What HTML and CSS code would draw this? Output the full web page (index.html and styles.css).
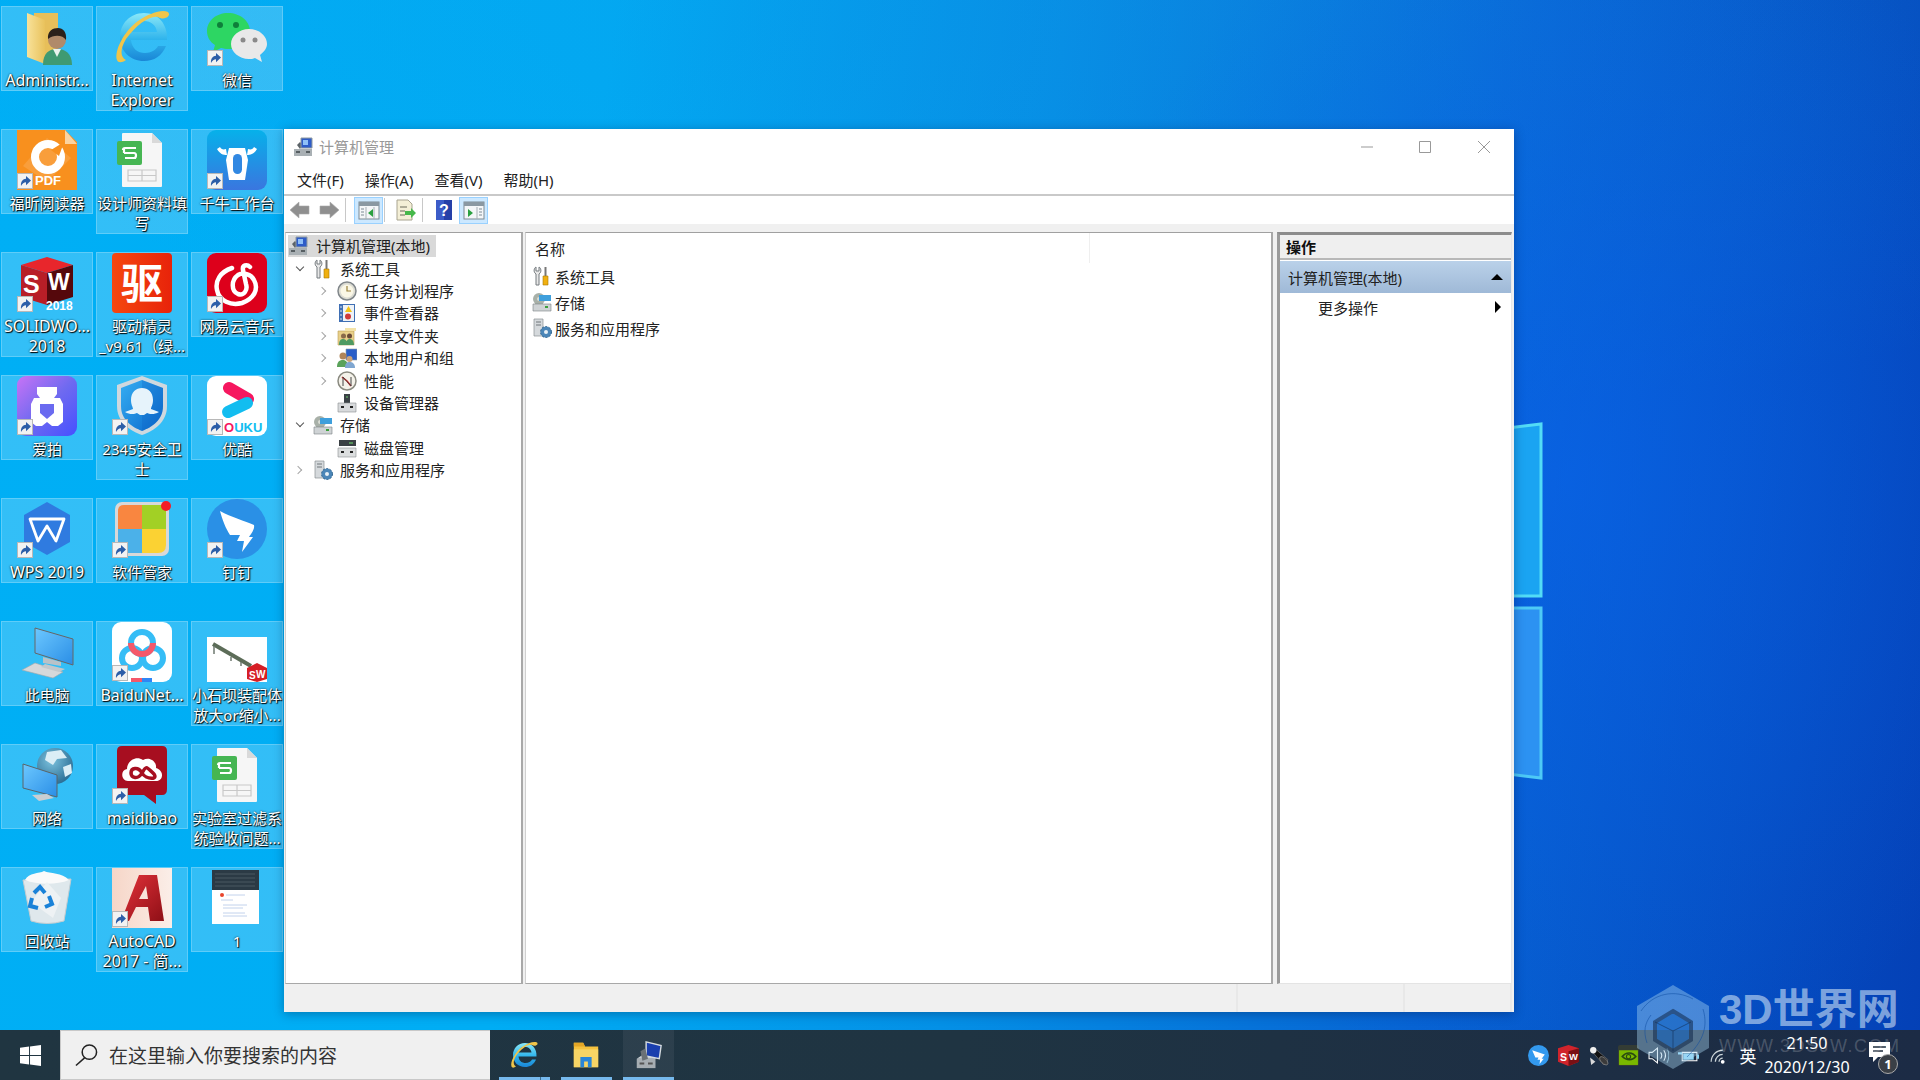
FILE: index.html
```html
<!DOCTYPE html>
<html lang="zh-CN">
<head>
<meta charset="utf-8">
<title>计算机管理</title>
<link rel="stylesheet" href="styles.css">
</head>
<body>
<svg class="sprite" xmlns="http://www.w3.org/2000/svg">
<defs>
<linearGradient id="g-ie" x1="0" y1="0" x2="0" y2="1"><stop offset="0" stop-color="#8be8f8"/><stop offset=".55" stop-color="#2fb4ec"/><stop offset="1" stop-color="#1a86d6"/></linearGradient>
<linearGradient id="g-qn" x1="0" y1="0" x2="0" y2="1"><stop offset="0" stop-color="#06b1ea"/><stop offset="1" stop-color="#3a76df"/></linearGradient>
<linearGradient id="g-qu" x1="0" y1="0" x2="1" y2="0"><stop offset="0" stop-color="#f5470f"/><stop offset="1" stop-color="#e8230a"/></linearGradient>
<linearGradient id="g-ap" x1="0" y1="0" x2="1" y2="1"><stop offset="0" stop-color="#c873f6"/><stop offset=".5" stop-color="#6f6af0"/><stop offset="1" stop-color="#4650ff"/></linearGradient>
<linearGradient id="g-sh" x1="0" y1="0" x2="1" y2="1"><stop offset="0" stop-color="#35aef2"/><stop offset="1" stop-color="#0a68cc"/></linearGradient>
<linearGradient id="g-mon" x1="0" y1="0" x2="1" y2="1"><stop offset="0" stop-color="#6cc8ff"/><stop offset="1" stop-color="#2a8ee6"/></linearGradient>
<radialGradient id="g-globe" cx=".4" cy=".35" r=".8"><stop offset="0" stop-color="#7cc2de"/><stop offset="1" stop-color="#1d5f88"/></radialGradient>
<linearGradient id="g-cad" x1="0" y1="0" x2="1" y2="0"><stop offset="0" stop-color="#f6d6c8"/><stop offset="1" stop-color="#fbeee8"/></linearGradient>
<linearGradient id="g-a" x1="0" y1="0" x2="1" y2="1"><stop offset="0" stop-color="#e4323a"/><stop offset="1" stop-color="#8e0f16"/></linearGradient>
<linearGradient id="g-fold" x1="0" y1="0" x2="1" y2="0"><stop offset="0" stop-color="#f8e29a"/><stop offset="1" stop-color="#e9c25c"/></linearGradient>

<symbol id="i-lnk" viewBox="0 0 16 16"><rect x=".5" y=".5" width="15" height="15" fill="#f2f2f2" stroke="#b8b8b8"/><path d="M4 13C3.500 8.500 6 6 9 5.800V3l5 4.600-5 4.600V9.200C7 9.200 5.200 10.500 4 13Z" fill="#2c5ea8"/></symbol>

<symbol id="i-admin" viewBox="0 0 60 60"><path d="M17 6H41V50H17Z" fill="#e7bf5a"/><path d="M10 6 28 13V57L10 50Z" fill="url(#g-fold)"/><path d="M26 58C26 46 32 42 40 42S55 46 55 58Z" fill="#3f9a72"/><path d="M36 42 40 50 44 42Z" fill="#e8f2ee"/><circle cx="40" cy="33" r="9" fill="#b08a6a"/><path d="M31 32C30 24 36 21 41 21S50 25 49 33C46 28 37 27 31 32Z" fill="#2b211b"/></symbol>

<symbol id="i-ie" viewBox="0 0 60 60"><path fill-rule="evenodd" d="M55 33H19C20 42 26 46 33 46 39 46 44 43 46 39H54C50 49 42 54 32 54 18 54 8 44 8 30 8 17 18 6 32 6 46 6 56 17 55 33ZM19 25H45C44 18 39 14 32 14 25 14 20 18 19 25Z" fill="url(#g-ie)"/><path d="M5 53C2 44 12 24 26 14 38 6 50 2 56 5 60 9 52 14 46 10 38 8 24 18 14 32 8 42 8 50 14 53 10 56 6 56 5 53Z" fill="#f0c54a"/></symbol>

<symbol id="i-wechat" viewBox="0 0 60 60"><path d="M21 6C9 6 0 14 0 24c0 6 3 11 8 14l-2 7 8-4c2 .5 5 1 7 1 12 0 22-8 22-18S33 6 21 6Z" fill="#2dd663"/><circle cx="13" cy="18" r="3" fill="#0e7f3a"/><circle cx="29" cy="18" r="3" fill="#0e7f3a"/><path d="M42 22c-10 0-18 7-18 15s8 15 18 15c2 0 4 0 6-1l7 4-2-7c4-3 7-7 7-11 0-8-8-15-18-15Z" fill="#e9e9e9"/><circle cx="36" cy="33" r="2.500" fill="#8a8a8a"/><circle cx="48" cy="33" r="2.500" fill="#8a8a8a"/></symbol>

<symbol id="i-foxit" viewBox="0 0 60 60"><path d="M0 0H48L60 12V60H0Z" fill="#f8901e"/><path d="M48 0 60 14H48Z" fill="#fbd3a0"/><path d="M30 8 54 28 30 52 6 36Z" fill="#fff" opacity=".13"/><circle cx="31" cy="27" r="13" fill="none" stroke="#fff" stroke-width="8"/><path d="M34 20 47 12 42 26Z" fill="#f8901e"/><text class="svg-b" x="18" y="55" font-size="13" fill="#fff">PDF</text></symbol>

<symbol id="i-doc" viewBox="0 0 60 60"><path d="M11 3H40L50 13V56Q50 57 49 57H11Q10 57 10 56V4Q10 3 11 3Z" fill="#f6f6f6"/><path d="M40 3 50 13H40Z" fill="#d9d9d9"/><rect x="5" y="11" width="25" height="24" rx="2" fill="#46b653"/><path d="M11 20Q11 18 13 18H24M24 28H13M12 23H22Q24 23 24 25.500 24 28 22 28" fill="none" stroke="#fff" stroke-width="2.200"/><path d="M12 19V23" stroke="#fff" stroke-width="2.200"/><path d="M16 40H44V51H16ZM16 45.500H44M30 40V51" fill="none" stroke="#c8c8c8" stroke-width="1.200"/></symbol>

<symbol id="i-qn" viewBox="0 0 60 60"><rect width="60" height="60" rx="9" fill="url(#g-qn)"/><path d="M10 19C13 24 16 25 20 25L19 19C16 20 14 19 13 17ZM50 19C47 24 44 25 40 25L41 19C44 20 46 19 47 17Z" fill="#fff"/><path d="M22 18H38L41 30 38 50H22L19 30Z" fill="#fff"/><rect x="26" y="24" width="9" height="20" rx="4.500" fill="#3188e2"/></symbol>

<symbol id="i-sw" viewBox="0 0 60 60"><path d="M30 4 56 12 30 20 4 12Z" fill="#e8262c"/><path d="M4 12 30 20V52L4 44Z" fill="#b81e27"/><path d="M30 20 56 12V44L30 52Z" fill="#55080c"/><text class="svg-b" x="6" y="40" font-size="25" fill="#fff">S</text><text class="svg-b" x="31" y="37" font-size="23" fill="#fff">W</text><text class="svg-b" x="29" y="57" font-size="12" fill="#fff">2018</text></symbol>

<symbol id="i-qu" viewBox="0 0 60 60"><rect width="60" height="60" rx="4" fill="url(#g-qu)"/><text class="svg-b" x="30" y="46" font-size="42" text-anchor="middle" fill="#fff">驱</text></symbol>

<symbol id="i-163" viewBox="0 0 60 60"><rect width="60" height="60" rx="9" fill="#dd001b"/><path d="M25 15C13 19 8 28 10 37 12 48 24 53 35 50 47 46 52 36 47 27 44 21 36 19 31 22 24 27 24 38 31 41 37 43 41 37 39 31L36 17C35 12 40 11 43 14" fill="none" stroke="#fff" stroke-width="4.500" stroke-linecap="round"/></symbol>

<symbol id="i-aipai" viewBox="0 0 60 60"><rect width="60" height="60" rx="9" fill="url(#g-ap)"/><path d="M20 11H40V18L37 22H43L46 28V46L41 50H35L30 46 25 50H19L14 46V28L17 22H23L20 18Z" fill="#fff"/><path d="M23 28H37V37L30 43 23 37Z" fill="#6a6af0"/></symbol>

<symbol id="i-2345" viewBox="0 0 60 60"><path d="M30 0 55 9V30C55 46 42 55 30 59 18 55 5 46 5 30V9Z" fill="#cfd8de"/><path d="M30 4 51 12V30C51 44 40 51 30 55 20 51 9 44 9 30V12Z" fill="url(#g-sh)"/><path d="M30 4 51 12V30C51 44 40 51 30 55Z" fill="#0a5cc0" opacity=".25"/><path d="M19 24C19 16 24 12 30 12S41 16 41 24C41 29 39 31 39 33L47 36C42 39 37 38 35 37L32 39H28L25 37C23 38 18 39 13 36L21 33C21 31 19 29 19 24Z" fill="#e6f3fb"/></symbol>

<symbol id="i-youku" viewBox="0 0 60 60"><rect width="60" height="60" rx="9" fill="#fff"/><path d="M22 12 41 23" stroke="#f6175f" stroke-width="12" stroke-linecap="round"/><path d="M21 36 40 27" stroke="#12bdf0" stroke-width="12" stroke-linecap="round"/><text class="svg-b" x="17" y="56" font-size="13"><tspan fill="#f6175f">O</tspan><tspan fill="#12bdf0">UKU</tspan></text></symbol>

<symbol id="i-wps" viewBox="0 0 60 60"><path d="M30 3 53 16V43L30 56 7 43V16Z" fill="#2f7be0"/><path d="M13 20H47L39 42 30 27 21 42Z" fill="none" stroke="#fff" stroke-width="2.800" stroke-linejoin="round"/></symbol>

<symbol id="i-soft" viewBox="0 0 60 60"><rect x="3" y="3" width="54" height="54" rx="7" fill="#d8d8d8"/><path d="M6 12Q6 6 12 6H30V30H6Z" fill="#f98640"/><path d="M30 6H50Q54 6 54 12V30H30Z" fill="#a2d025"/><path d="M6 30H30V54H12Q6 54 6 48Z" fill="#4bb1e9"/><path d="M30 30H54V46Q54 54 46 54H30Z" fill="#fbd233"/><circle cx="54" cy="7" r="5" fill="#f41d25"/></symbol>

<symbol id="i-ding" viewBox="0 0 60 60"><circle cx="30" cy="30" r="30" fill="#2a90e6"/><path d="M13 12C24 18 38 22 47 26 48 30 44 35 42 38H46L35 53 37 42H30L33 36H23C19 30 15 20 13 12Z" fill="#fff"/></symbol>

<symbol id="i-pc" viewBox="0 0 60 60"><path d="M18 6 56 17V43L18 31Z" fill="url(#g-mon)" stroke="#666"/><path d="M26 35 44 40V44L26 41Z" fill="#b9c2c8"/><path d="M5 48 18 41 46 50 36 56Z" fill="#d6d8da" stroke="#a8a8a8" stroke-width=".6"/><path d="M28 42 48 47 42 50 24 45Z" fill="#c2c8cc"/></symbol>

<symbol id="i-baidu" viewBox="0 0 60 60"><rect width="60" height="60" rx="9" fill="#fff"/><circle cx="20" cy="36" r="10" fill="none" stroke="#35bdf6" stroke-width="6"/><circle cx="41" cy="36" r="10" fill="none" stroke="#35bdf6" stroke-width="6"/><circle cx="30" cy="21" r="11" fill="none" stroke="#35bdf6" stroke-width="6"/><path d="M19 21A11 11 0 0 0 41 21" fill="none" stroke="#f5586a" stroke-width="6"/><path d="M19 56H30V60H19Z" fill="#f5586a"/><path d="M30 56H40V60H30Z" fill="#2f86f5"/></symbol>

<symbol id="i-belt" viewBox="0 0 60 60"><rect y="15" width="60" height="45" fill="#fff"/><path d="M6 22 44 44" stroke="#5c6c58" stroke-width="4"/><path d="M7 24V32M24 35V39M34 40V44" stroke="#6f7a70" stroke-width="1.500"/><path d="M40 46 50 41 60 46 60 57 50 60 40 57Z" fill="#d61f26"/><text class="svg-b" x="42" y="57" font-size="10" fill="#fff">S</text><text class="svg-b" x="49" y="56" font-size="10" fill="#fff">W</text></symbol>

<symbol id="i-net" viewBox="0 0 60 60"><circle cx="38" cy="21" r="18" fill="url(#g-globe)"/><path d="M30 7 44 5 50 13 40 14 36 20 28 15ZM46 22 54 19 55 28 48 32Z" fill="#dbeef6"/><path d="M6 19 40 30V52L6 43Z" fill="url(#g-mon)" stroke="#5a6468"/><path d="M15 50 30 49 37 53 22 56Z" fill="#c8ced2"/></symbol>

<symbol id="i-maidi" viewBox="0 0 60 60"><path d="M10 1H50Q55 1 55 6V44Q55 50 50 50H44V59L32 50H10Q5 50 5 44V6Q5 1 10 1Z" fill="#a70e20"/><path d="M16 36C9 36 8 25 15 24 15 16 24 10 31 15 38 11 45 17 44 23 52 25 52 36 44 36Z" fill="#fff"/><path d="M30 28C26 21 19 23 19 28S26 35 30 28 34 21 41 28 34 35 30 28Z" fill="none" stroke="#a70e20" stroke-width="3.500"/></symbol>

<symbol id="i-bin" viewBox="0 0 60 60"><path d="M6 12 54 11 47 53Q30 58 14 53Z" fill="#dfe8ec" stroke="#c4ccd0"/><path d="M8 12C12 4 22 6 27 3 33 6 45 4 52 12 40 17 20 17 8 12Z" fill="#fafafa"/><path d="M30 14 44 30 36 50 14 34Z" fill="#eef2f4"/><path d="M17 25 23 19 28 25M32 28 35 36 28 39M21 40 13 38 15 30" fill="none" stroke="#1a82d8" stroke-width="4"/></symbol>

<symbol id="i-cad" viewBox="0 0 60 60"><rect width="60" height="60" fill="url(#g-cad)"/><path fill-rule="evenodd" d="M27 7H45L52 53H38L36 39H24L17 53H9ZM34 18 27 31H36Z" fill="url(#g-a)"/></symbol>

<symbol id="i-shot" viewBox="0 0 60 60"><rect x="5" y="2" width="47" height="54" fill="#fff"/><rect x="5" y="2" width="47" height="20" fill="#2b3a45"/><path d="M8 6H48M8 10H48M8 14H48M8 18H48" stroke="#4a5862"/><circle cx="15" cy="27" r="2" fill="#e8452c"/><path d="M19 27H38M14 32H26M16 37H40M16 40H36M16 45H38M16 48H40" stroke="#c2d2ec"/></symbol>

<symbol id="s-mgmt" viewBox="0 0 20 20"><path d="M1 12H19V19H1Z" fill="#a9b0b4"/><path d="M3 15H7M13 15H17" stroke="#3c4448" stroke-width="1.500"/><path d="M4 8 7 5 10 8 7 12Z" fill="#5c6368"/><path d="M8 1H19V11H8Z" fill="#2e5cc8" stroke="#8f9aa0"/><path d="M10 3H15V8H10Z" fill="#8fc0f8"/></symbol>
<symbol id="s-tools" viewBox="0 0 20 20"><path d="M4 19V8C1 6 2 2 4 1V5H7V1C9 2 10 6 7 8V19Z" fill="#e8e8e8" stroke="#747a7e"/><path d="M13.500 1V10" stroke="#777" stroke-width="2"/><path d="M11 10H16V19H11Z" fill="#f0b010" stroke="#a87a08" stroke-width=".6"/></symbol>
<symbol id="s-clock" viewBox="0 0 20 20"><circle cx="10" cy="10" r="9" fill="#dcdcd4" stroke="#80868a" stroke-width="1.500"/><circle cx="10" cy="10" r="6.500" fill="#faf7e6"/><path d="M10 5V10H14" stroke="#99803a" stroke-width="1.200" fill="none"/></symbol>
<symbol id="s-event" viewBox="0 0 20 20"><rect x="2" y="1" width="16" height="18" fill="#3f6fb4"/><rect x="6" y="2" width="11" height="16" fill="#eef2f6"/><path d="M3 4H5M3 8H5M3 12H5M3 16H5" stroke="#dfe7f0"/><path d="M11.500 3 15 9H8Z" fill="#f3c316"/><circle cx="11" cy="13.500" r="3" fill="#d03a3a"/></symbol>
<symbol id="s-share" viewBox="0 0 20 20"><path d="M1 5H17V19H1Z" fill="#e9d08a" stroke="#b89c50" stroke-width=".6"/><path d="M8 2H19V5H8Z" fill="#f4e3a8"/><circle cx="6.500" cy="10" r="2.500" fill="#8a6a4a"/><circle cx="12.500" cy="10" r="2.500" fill="#6a4a38"/><path d="M2 19C2 14 4 13 6.500 13S10 15 10 19ZM9 19C9 14 11 13 13 13S17 15 17 19Z" fill="#4f9a62"/></symbol>
<symbol id="s-users" viewBox="0 0 20 20"><path d="M9 1H20V12H9Z" fill="#2a5ec8" stroke="#8c9aa4" stroke-width=".6"/><circle cx="6" cy="8" r="3.500" fill="#b08458"/><path d="M0 19C0 13 3 12 6 12S11 14 11 19Z" fill="#5aa25a"/><circle cx="12.500" cy="11" r="3" fill="#c9a27a"/><path d="M8 20C8 15 10 14 12.500 14S18 15 18 20Z" fill="#7fa6d0"/></symbol>
<symbol id="s-perf" viewBox="0 0 20 20"><circle cx="10" cy="10" r="9" fill="#f4f2ea" stroke="#8a8a80" stroke-width="1.500"/><path d="M5 6 10 10 14 15" stroke="#d22" stroke-width="1.600" fill="none"/><path d="M6 15V6L14 15V6" stroke="#444" stroke-width="1" fill="none"/></symbol>
<symbol id="s-dev" viewBox="0 0 20 20"><path d="M7 1H13V10H7Z" fill="#3b4246"/><path d="M1 10H19V19H1Z" fill="#d8dadc" stroke="#8a8e90" stroke-width=".6"/><path d="M4 14H7M13 14H16" stroke="#222" stroke-width="2"/><path d="M9 4H11" stroke="#6fd06f"/></symbol>
<symbol id="s-store" viewBox="0 0 20 20"><circle cx="7" cy="7" r="6" fill="#a8b0a8"/><circle cx="7" cy="7" r="2" fill="#d8dcd4"/><path d="M7 3H19V9H7Z" fill="#3f9fdc"/><path d="M1 12H19V19H1Z" fill="#cfd3d5" stroke="#7b8185" stroke-width=".6"/><path d="M13 15H16" stroke="#3ca03c" stroke-width="2"/></symbol>
<symbol id="s-disk" viewBox="0 0 20 20"><path d="M2 2H19V8H2Z" fill="#3a4044"/><path d="M12 5H16" stroke="#6fe06f"/><path d="M1 10H19V19H1Z" fill="#dcdedf" stroke="#8a8e90" stroke-width=".6"/><path d="M4 14H7M13 14H16" stroke="#222" stroke-width="2"/></symbol>
<symbol id="s-svc" viewBox="0 0 20 20"><path d="M2 1H11V18H2Z" fill="#d5d9dc" stroke="#8b9094" stroke-width=".7"/><path d="M4 4H9M4 7H9" stroke="#70767a"/><circle cx="14" cy="14" r="5.500" fill="#4b86b8"/><circle cx="14" cy="14" r="2" fill="#e8f0f6"/><circle cx="14" cy="14" r="5.500" fill="none" stroke="#2f648f" stroke-dasharray="2 1.500"/></symbol>

<symbol id="t-back" viewBox="0 0 22 20"><path d="M1 10 10 2V6H20V14H10V18Z" fill="#8f8f8f" stroke="#aaa" stroke-width=".6"/></symbol>
<symbol id="t-fwd" viewBox="0 0 22 20"><path d="M21 10 12 2V6H2V14H12V18Z" fill="#8f8f8f" stroke="#aaa" stroke-width=".6"/></symbol>
<symbol id="t-pane-l" viewBox="0 0 22 20"><rect x="1" y="2" width="20" height="17" fill="#f4f6f8" stroke="#7c8a94"/><path d="M1 2H21V6H1Z" fill="#8a98a2"/><path d="M8 7V19M16 7V19" stroke="#a8b0b6"/><path d="M3 9H6M3 12H6M3 15H6" stroke="#7c8a94"/><path d="M15 9V17L10 13Z" fill="#2aa040"/></symbol>
<symbol id="t-pane-r" viewBox="0 0 22 20"><rect x="1" y="2" width="20" height="17" fill="#f4f6f8" stroke="#7c8a94"/><path d="M1 2H21V6H1Z" fill="#8a98a2"/><path d="M14 7V19" stroke="#a8b0b6"/><path d="M16 9H19M16 12H19M16 15H19" stroke="#7c8a94"/><path d="M5 9V17L10 13Z" fill="#2aa040"/></symbol>
<symbol id="t-export" viewBox="0 0 22 22"><path d="M2 1H13L17 5V21H2Z" fill="#f4efd6" stroke="#a8a490"/><path d="M5 8H12M5 12H10M5 16H10" stroke="#6a6a5a"/><path d="M10 12H16V9L21 14 16 19V16H10Z" fill="#46b84a"/></symbol>
<symbol id="t-help" viewBox="0 0 18 22"><rect x="1" y="1" width="16" height="20" fill="#2640a8"/><rect x="1" y="1" width="8" height="20" fill="#3c5cc8"/><text class="svg-b" x="9" y="17" font-size="16" text-anchor="middle" fill="#fff">?</text></symbol>

<symbol id="a-mgmt" viewBox="0 0 32 32"><path d="M4 20H24V30H4Z" fill="#a6adb2"/><path d="M4 20 10 16H26L24 20Z" fill="#c8ced2"/><path d="M7 25H12M16 25H21" stroke="#555" stroke-width="2"/><path d="M14 2 30 6 28 20 14 17Z" fill="#1a3fae" stroke="#d6dce0" stroke-width="1.500"/><path d="M8 12 13 9 16 20 10 22Z" fill="#6a7176"/></symbol>
<symbol id="a-folder" viewBox="0 0 32 32"><path d="M3 3H13L15 7H29V29H3Z" fill="#f5c23e"/><path d="M3 3H13L15 7H3Z" fill="#e3a626"/><path d="M3 10H29V29H3Z" fill="#f8d565"/><path d="M10 18H22V29H18V23H14V29H10Z" fill="#2a86d8"/></symbol>

<symbol id="y-ding" viewBox="0 0 20 20"><circle cx="10" cy="10" r="10" fill="#3399ee"/><path d="M4 5 16 9 13 13H15L11 18 11.500 14H9L10 12H7Z" fill="#fff"/></symbol>
<symbol id="y-sw" viewBox="0 0 20 20"><path d="M0 3 10 0 20 3V16L10 20 0 16Z" fill="#d0242c"/><path d="M10 6 20 3V16L10 20Z" fill="#7a1014"/><text class="svg-b" x="2" y="15" font-size="10" fill="#fff">S</text><text class="svg-b" x="10.500" y="14" font-size="9" fill="#fff">W</text></symbol>
<symbol id="y-spk" viewBox="0 0 20 20"><path d="M2 4 5 2 19 14 15 19Z" fill="#111" stroke="#777" stroke-width=".6"/><ellipse cx="15" cy="15" rx="2.500" ry="5" transform="rotate(-45 15 15)" fill="#3a3a3a" stroke="#999" stroke-width=".6"/><circle cx="5" cy="5" r="3" fill="#f0f0f0"/><path d="M2 12 7 16 3 19Z" fill="#d8d8d8"/></symbol>
<symbol id="y-nv" viewBox="0 0 20 20"><rect width="20" height="20" rx="2" fill="#343c34"/><rect x="1" y="5" width="18" height="14" fill="#7ab800"/><path d="M4 11C8 6 14 7 17 11 14 15 8 15 4 11Z" fill="none" stroke="#2a4a10" stroke-width="1.500"/><circle cx="10" cy="11" r="2" fill="none" stroke="#2a4a10"/></symbol>
<symbol id="y-vol" viewBox="0 0 20 20"><path d="M1 7H4L9 3V17L4 13H1Z" fill="none" stroke="#fff"/><path d="M12 7C13.500 9 13.500 11 12 13M15 5C17 8 17 12 15 15" fill="none" stroke="#fff"/><path d="M18 3C20.500 7 20.500 13 18 17" fill="none" stroke="#7ea4b8"/></symbol>
<symbol id="y-bat" viewBox="0 0 20 20"><path d="M4 7H18V15H4Z" fill="none" stroke="#fff"/><path d="M5 8H15V14H5Z" fill="#8fd8f8"/><path d="M18 9H20V13H18ZM1 3V7M3 3V7M0 7H4V9H0Z" fill="#8fd8f8"/></symbol>
<symbol id="y-wifi" viewBox="0 0 20 20"><circle cx="14" cy="16" r="1.800" fill="#fff"/><path d="M3 16A11 11 0 0 1 14 5M7 16A7 7 0 0 1 14 9M10.500 16A3.500 3.500 0 0 1 14 12.500" fill="none" stroke="#cfd8dc" stroke-width="1.200"/></symbol>
</defs>
</svg>

<div class="screen">
  <main class="desktop">
    <div class="wallpaper-logo">
      <svg class="logo-svg" viewBox="0 0 100 354"><path d="M0 7 57 0V172H0Z" fill="#1aa4f2" stroke="#52dcf6" stroke-width="3"/><path d="M0 184H57V354L0 347Z" fill="#2c92f2" stroke="#4dc9f6" stroke-width="3"/></svg>
    </div>

    <section class="icons">
      <a class="tile"><span class="ico"><svg class="art"><use href="#i-admin"/></svg></span><span class="label lat">Administr...</span></a>
      <a class="tile"><span class="ico"><svg class="art"><use href="#i-ie"/></svg></span><span class="label lat">Internet Explorer</span></a>
      <a class="tile"><span class="ico"><svg class="art"><use href="#i-wechat"/></svg><svg class="lnk"><use href="#i-lnk"/></svg></span><span class="label">微信</span></a>

      <a class="tile"><span class="ico"><svg class="art"><use href="#i-foxit"/></svg><svg class="lnk"><use href="#i-lnk"/></svg></span><span class="label">福昕阅读器</span></a>
      <a class="tile"><span class="ico"><svg class="art"><use href="#i-doc"/></svg></span><span class="label">设计师资料填写</span></a>
      <a class="tile"><span class="ico"><svg class="art"><use href="#i-qn"/></svg><svg class="lnk"><use href="#i-lnk"/></svg></span><span class="label">千牛工作台</span></a>

      <a class="tile"><span class="ico"><svg class="art"><use href="#i-sw"/></svg><svg class="lnk"><use href="#i-lnk"/></svg></span><span class="label lat">SOLIDWO...<br>2018</span></a>
      <a class="tile"><span class="ico"><svg class="art"><use href="#i-qu"/></svg></span><span class="label">驱动精灵<br>_v9.61（绿...</span></a>
      <a class="tile"><span class="ico"><svg class="art"><use href="#i-163"/></svg><svg class="lnk"><use href="#i-lnk"/></svg></span><span class="label">网易云音乐</span></a>

      <a class="tile"><span class="ico"><svg class="art"><use href="#i-aipai"/></svg><svg class="lnk"><use href="#i-lnk"/></svg></span><span class="label">爱拍</span></a>
      <a class="tile"><span class="ico"><svg class="art"><use href="#i-2345"/></svg><svg class="lnk"><use href="#i-lnk"/></svg></span><span class="label">2345安全卫士</span></a>
      <a class="tile"><span class="ico"><svg class="art"><use href="#i-youku"/></svg><svg class="lnk"><use href="#i-lnk"/></svg></span><span class="label">优酷</span></a>

      <a class="tile"><span class="ico"><svg class="art"><use href="#i-wps"/></svg><svg class="lnk"><use href="#i-lnk"/></svg></span><span class="label lat">WPS 2019</span></a>
      <a class="tile"><span class="ico"><svg class="art"><use href="#i-soft"/></svg><svg class="lnk"><use href="#i-lnk"/></svg></span><span class="label">软件管家</span></a>
      <a class="tile"><span class="ico"><svg class="art"><use href="#i-ding"/></svg><svg class="lnk"><use href="#i-lnk"/></svg></span><span class="label">钉钉</span></a>

      <a class="tile"><span class="ico"><svg class="art"><use href="#i-pc"/></svg></span><span class="label">此电脑</span></a>
      <a class="tile"><span class="ico"><svg class="art"><use href="#i-baidu"/></svg><svg class="lnk"><use href="#i-lnk"/></svg></span><span class="label lat">BaiduNet...</span></a>
      <a class="tile"><span class="ico"><svg class="art"><use href="#i-belt"/></svg></span><span class="label">小石坝装配体<br>放大or缩小...</span></a>

      <a class="tile"><span class="ico"><svg class="art"><use href="#i-net"/></svg></span><span class="label">网络</span></a>
      <a class="tile"><span class="ico"><svg class="art"><use href="#i-maidi"/></svg><svg class="lnk"><use href="#i-lnk"/></svg></span><span class="label lat">maidibao</span></a>
      <a class="tile"><span class="ico"><svg class="art"><use href="#i-doc"/></svg></span><span class="label">实验室过滤系<br>统验收问题...</span></a>

      <a class="tile"><span class="ico"><svg class="art"><use href="#i-bin"/></svg></span><span class="label">回收站</span></a>
      <a class="tile"><span class="ico"><svg class="art"><use href="#i-cad"/></svg><svg class="lnk"><use href="#i-lnk"/></svg></span><span class="label lat">AutoCAD<br>2017 - 简...</span></a>
      <a class="tile"><span class="ico"><svg class="art"><use href="#i-shot"/></svg></span><span class="label">1</span></a>
    </section>

    <section class="window">
      <header class="titlebar">
        <svg class="title-icon"><use href="#s-mgmt"/></svg>
        <span class="title-text">计算机管理</span>
        <div class="controls">
          <span class="ctl"><svg class="ctl-svg" viewBox="0 0 12 12"><path d="M0 6H12" stroke="#999" fill="none"/></svg></span>
          <span class="ctl"><svg class="ctl-svg" viewBox="0 0 12 12"><path d="M.5.5H11.500V11.500H.5Z" stroke="#999" fill="none"/></svg></span>
          <span class="ctl"><svg class="ctl-svg" viewBox="0 0 12 12"><path d="M0 0 12 12M12 0 0 12" stroke="#999" fill="none"/></svg></span>
        </div>
      </header>
      <nav class="menubar">
        <span class="menu">文件(F)</span><span class="menu">操作(A)</span><span class="menu">查看(V)</span><span class="menu">帮助(H)</span>
      </nav>
      <div class="toolbar">
        <span class="tb"><svg class="tb-svg"><use href="#t-back"/></svg></span>
        <span class="tb"><svg class="tb-svg"><use href="#t-fwd"/></svg></span>
        <i class="sep sep-a"></i>
        <span class="tb tb-on"><svg class="tb-svg"><use href="#t-pane-l"/></svg></span>
        <i class="sep sep-b"></i>
        <span class="tb tb-export"><svg class="tb-svg"><use href="#t-export"/></svg></span>
        <i class="sep"></i>
        <span class="tb tb-help"><svg class="tb-svg"><use href="#t-help"/></svg></span>
        <span class="tb tb-on"><svg class="tb-svg"><use href="#t-pane-r"/></svg></span>
      </div>
      <div class="panes">
        <aside class="pane tree">
          <div class="row root"><svg class="sm"><use href="#s-mgmt"/></svg><span>计算机管理(本地)</span></div>
          <div class="row lv1"><span class="chev open"></span><svg class="sm"><use href="#s-tools"/></svg><span>系统工具</span></div>
          <div class="row lv2"><span class="chev"></span><svg class="sm"><use href="#s-clock"/></svg><span>任务计划程序</span></div>
          <div class="row lv2"><span class="chev"></span><svg class="sm"><use href="#s-event"/></svg><span>事件查看器</span></div>
          <div class="row lv2"><span class="chev"></span><svg class="sm"><use href="#s-share"/></svg><span>共享文件夹</span></div>
          <div class="row lv2"><span class="chev"></span><svg class="sm"><use href="#s-users"/></svg><span>本地用户和组</span></div>
          <div class="row lv2"><span class="chev"></span><svg class="sm"><use href="#s-perf"/></svg><span>性能</span></div>
          <div class="row lv2"><span class="nochev"></span><svg class="sm"><use href="#s-dev"/></svg><span>设备管理器</span></div>
          <div class="row lv1"><span class="chev open"></span><svg class="sm"><use href="#s-store"/></svg><span>存储</span></div>
          <div class="row lv2"><span class="nochev"></span><svg class="sm"><use href="#s-disk"/></svg><span>磁盘管理</span></div>
          <div class="row lv1"><span class="chev"></span><svg class="sm"><use href="#s-svc"/></svg><span>服务和应用程序</span></div>
        </aside>
        <section class="pane list">
          <div class="list-head"><span class="col-name">名称</span><span class="col-rest"></span></div>
          <div class="list-row"><svg class="sm"><use href="#s-tools"/></svg><span>系统工具</span></div>
          <div class="list-row"><svg class="sm"><use href="#s-store"/></svg><span>存储</span></div>
          <div class="list-row"><svg class="sm"><use href="#s-svc"/></svg><span>服务和应用程序</span></div>
        </section>
        <aside class="actions">
          <div class="act-head">操作</div>
          <div class="act-group"><span>计算机管理(本地)</span><i class="tri-up"></i></div>
          <div class="act-item"><span>更多操作</span><i class="tri-right"></i></div>
        </aside>
      </div>
      <footer class="status"><span class="st st-a"></span><span class="st st-b"></span><span class="st st-c"></span></footer>
    </section>
  </main>

  <footer class="taskbar">
    <div class="start"><svg class="win" viewBox="0 0 22 22"><path d="M0 3 9.500 1.700V10.500H0ZM10.500 1.500 22 0V10.500H10.500ZM0 11.500H9.500V20.300L0 19ZM10.500 11.500H22V22L10.500 20.500Z" fill="#fff"/></svg></div>
    <div class="search"><svg class="search-ico" viewBox="0 0 24 24"><circle cx="15" cy="9" r="7.500" fill="none" stroke="#222" stroke-width="1.600"/><path d="M10 15 1 23" stroke="#222" stroke-width="1.600"/></svg><span>在这里输入你要搜索的内容</span></div>
    <div class="apps">
      <span class="app app-split"><svg class="app-ico"><use href="#i-ie"/></svg></span>
      <span class="app"><svg class="app-ico"><use href="#a-folder"/></svg></span>
      <span class="app app-on"><svg class="app-ico"><use href="#a-mgmt"/></svg></span>
    </div>
    <div class="tray">
      <span class="ty"><svg class="ty-svg"><use href="#y-ding"/></svg></span>
      <span class="ty"><svg class="ty-svg"><use href="#y-sw"/></svg></span>
      <span class="ty"><svg class="ty-svg"><use href="#y-spk"/></svg></span>
      <span class="ty"><svg class="ty-svg"><use href="#y-nv"/></svg></span>
      <span class="ty"><svg class="ty-svg"><use href="#y-vol"/></svg></span>
      <span class="ty"><svg class="ty-svg"><use href="#y-bat"/></svg></span>
      <span class="ty"><svg class="ty-svg"><use href="#y-wifi"/></svg></span>
      <span class="ty ime">英</span>
      <div class="clock"><span>21:50</span><span>2020/12/30</span></div>
      <div class="notify">
        <svg class="note" viewBox="0 0 22 22"><path d="M0 0H21V15H9L4 20V15H0Z" fill="#fff"/><path d="M4 5H17M4 9H14" stroke="#1e2c3c" stroke-width="1.500"/></svg>
        <span class="badge">1</span>
      </div>
    </div>
  </footer>

  <div class="watermark">
    <svg class="wm-logo" viewBox="0 0 72 84"><path d="M36 0 72 21V63L36 84 0 63V21Z" fill="#a8d4f0" opacity=".42"/><path d="M4 26C16 8 38 4 56 14M66 24C72 44 64 58 50 72M10 58C6 46 8 38 14 30" fill="none" stroke="#0a4aa0" stroke-width="1" opacity=".5"/><path d="M36 26 54 37V55L36 66 18 55V37Z" fill="#0a5ec0" opacity=".55" stroke="#10284a" stroke-width="4"/><path d="M36 46V66M36 46 18 37M36 46 54 37" stroke="#10284a" stroke-width="1" opacity=".5"/></svg>
    <div class="wm-text"><span class="wm-big">3D世界网</span><span class="wm-url">WWW.3DSJW.COM</span></div>
  </div>
</div>
</body>
</html>
```

FILE: styles.css
```css
* { box-sizing: border-box; }
html, body { margin: 0; padding: 0; }
body {
  width: 1920px;
  height: 1080px;
  overflow: hidden;
  font-family: "Noto Sans", "Noto Sans CJK SC", sans-serif;
  font-size: 15px;
  color: #222;
}
.sprite { position: absolute; width: 0; height: 0; }
.svg-b { font-family: "Liberation Sans", "Noto Sans CJK SC", sans-serif; font-weight: 700; }

.screen {
  position: relative;
  width: 1920px;
  height: 1080px;
  display: flex;
  flex-direction: column;
  background:
    radial-gradient(ellipse 520px 620px at 1570px 480px, rgba(10,100,240,.55), rgba(10,100,240,0) 100%),
    radial-gradient(ellipse 1300px 420px at 1200px 0, rgba(20,140,225,.3), rgba(20,140,225,0) 100%),
    linear-gradient(97deg, #00aff5 0, #00adf4 30%, #0490e6 52%, #0763d2 75%, #0440b6 100%);
}

/* desktop */
.desktop { position: relative; flex: 1; min-height: 0; }
.wallpaper-logo { position: absolute; left: 1484px; top: 424px; }
.logo-svg { display: block; width: 100px; height: 354px; overflow: visible; }

.icons {
  position: relative;
  display: grid;
  grid-template-columns: repeat(3, 92px);
  grid-auto-rows: 123px;
  column-gap: 3px;
  padding: 6px 0 0 1px;
  align-items: start;
  width: 284px;
}
.tile {
  display: flex;
  flex-direction: column;
  align-items: center;
  padding-top: 1px;
  padding-bottom: 1px;
  background: rgba(255,255,255,.2);
  outline: 1px solid rgba(255,255,255,.22);
  outline-offset: -1px;
}
.ico { position: relative; display: block; width: 60px; height: 60px; margin-bottom: 3px; }
.art { display: block; width: 60px; height: 60px; overflow: visible; }
.lnk { position: absolute; left: 0; bottom: 1px; width: 16px; height: 16px; }
.label {
  width: 92px;
  text-align: center;
  color: #fff;
  font-size: 15px;
  line-height: 20px;
  text-shadow: 1px 1px 1px #000, 0 0 2px rgba(0,0,0,.8);
  white-space: normal;
}
.lat { font-size: 16px; }

/* window */
.window {
  position: absolute;
  left: 284px;
  top: 129px;
  width: 1230px;
  height: 883px;
  display: flex;
  flex-direction: column;
  background: #f0f0f0;
  box-shadow: 0 2px 10px rgba(0,20,60,.35);
}
.titlebar {
  height: 36px;
  flex: none;
  display: flex;
  align-items: center;
  padding-left: 9px;
  background: #fff;
}
.title-icon { width: 20px; height: 20px; margin-right: 6px; }
.title-text { color: #999; font-size: 15px; margin-top: -2px; }
.controls { margin-left: auto; display: flex; padding-right: 1px; }
.ctl { width: 58.500px; height: 36px; display: flex; align-items: center; justify-content: center; }
.ctl-svg { width: 12px; height: 12px; }
.menubar {
  height: 31px;
  flex: none;
  display: flex;
  align-items: center;
  gap: 21px;
  padding-left: 13px;
  padding-bottom: 1px;
  background: #fff;
  border-bottom: 2px solid #c9c9c9;
  color: #222;
  font-size: 15px;
}
.toolbar {
  height: 28px;
  flex: none;
  display: flex;
  align-items: center;
  padding-left: 1px;
  background: #fff;
}
.tb { width: 29px; height: 27px; display: flex; align-items: center; justify-content: center; }
.tb-export { width: 33px; margin-left: 3px; }
.tb-help { width: 36px; padding-left: 6px; }
.tb-on { background: #cce8ff; border: 1px solid #99d1ff; }
.tb-svg { width: 22px; height: 22px; }
.sep { width: 1px; height: 24px; background: #c8c8c8; }
.sep-a { margin: 0 8px 0 2px; }
.sep-b { margin: 0 1px; }

.panes {
  flex: 1;
  min-height: 0;
  display: flex;
  padding: 8px 2px 0 1px;
}
.pane {
  background: #fff;
  border-top: 1px solid #a0a0a0;
  border-left: 1px solid #d0d0d0;
  border-right: 2px solid #a8a8a8;
  border-bottom: 1px solid #a8a8a8;
}
.tree { width: 238px; padding-top: 2px; margin-right: 2px; font-size: 15px; }
.row { display: flex; align-items: center; height: 22.400px; color: #222; line-height: 20px; }
.sm { width: 20px; height: 20px; flex: none; }
.root { width: 148px; margin-left: 2px; background: #d9d9d9; }
.root .sm { margin: 0 8px 0 0; }
.lv1 { padding-left: 8px; }
.lv2 { padding-left: 32px; }
.lv1 .sm, .lv2 .sm { margin: 0 7px; }
.chev, .nochev { display: block; width: 12px; height: 12px; flex: none; position: relative; }
.chev::before {
  content: "";
  position: absolute;
  left: 1px;
  top: 3px;
  width: 5px;
  height: 5px;
  border-right: 1px solid #a6a6a6;
  border-top: 1px solid #a6a6a6;
  transform: rotate(45deg);
}
.chev.open::before {
  left: 3px;
  top: 1px;
  border-color: #555;
  transform: rotate(135deg);
}
.list { width: 748px; margin-right: 4px; font-size: 15px; }
.list-head { display: flex; height: 30px; align-items: center; }
.col-name { width: 564px; height: 100%; display: flex; align-items: center; padding-left: 9px; border-right: 1px solid #efefef; }
.list-row { display: flex; align-items: center; height: 26px; padding-left: 6px; gap: 3px; color: #222; }
.actions {
  flex: 1;
  background: #fff;
  border-top: 3px solid #8c8c8c;
  border-left: 3px solid #9a9a9a;
  border-bottom: 1px solid #e4e4e4;
  border-right: 1px solid #e8e8e8;
}
.act-head {
  height: 25px;
  padding-left: 6px;
  display: flex;
  align-items: center;
  background: #efefef;
  border-bottom: 2px solid #b8b8b8;
  font-weight: 700;
  color: #111;
}
.act-group {
  height: 32px;
  margin-top: 1px;
  display: flex;
  align-items: center;
  justify-content: space-between;
  padding: 0 8px 0 8px;
  background: linear-gradient(180deg, #bad1e9, #9fb9d7);
  color: #222;
}
.tri-up { width: 0; height: 0; border-left: 6px solid transparent; border-right: 6px solid transparent; border-bottom: 6px solid #000; }
.act-item {
  height: 30px;
  display: flex;
  align-items: center;
  justify-content: space-between;
  padding: 0 10px 2px 38px;
  color: #222;
}
.tri-right { width: 0; height: 0; border-top: 6px solid transparent; border-bottom: 6px solid transparent; border-left: 6px solid #000; }
.status { height: 28px; flex: none; display: flex; background: #f0f0f0; padding-right: 2px; }
.st { height: 100%; border-right: 2px solid #e8e8e8; }
.st-a { width: 954px; }
.st-b { width: 167px; }
.st-c { flex: 1; }

/* taskbar */
.taskbar {
  height: 50px;
  flex: none;
  display: flex;
  align-items: stretch;
  background: linear-gradient(90deg, #203541 0, #1f3442 50%, #1c2b45 100%);
  color: #fff;
}
.start { width: 60px; display: flex; align-items: center; justify-content: center; }
.win { width: 21px; height: 21px; }
.search {
  width: 430px;
  display: flex;
  align-items: center;
  gap: 11px;
  padding-left: 14px;
  background: #f0f0f0;
  border: 1px solid #c8c8c8;
  border-right: 0;
  color: #333;
  font-size: 19px;
}
.search-ico { width: 23px; height: 24px; flex: none; }
.apps { display: flex; gap: 11px; padding-left: 9px; }
.app { position: relative; width: 51px; display: flex; align-items: center; justify-content: center; padding-right: 2px; }
.app::after { content: ""; position: absolute; left: 0; right: 0; bottom: 0; height: 3px; background: #76b9ed; }
.app-split::before { content: ""; position: absolute; right: 9px; bottom: 0; width: 1px; height: 3px; background: #3e6e90; z-index: 1; }
.app-on { background: rgba(255,255,255,.06); }
.app-ico { width: 30px; height: 30px; }
.tray { margin-left: auto; display: flex; align-items: center; height: 100%; padding-right: 5px; }
.ty { width: 30px; display: flex; align-items: center; justify-content: center; }
.ty-svg { width: 21px; height: 21px; }
.ime { font-size: 17px; }
.clock {
  width: 88px;
  display: flex;
  flex-direction: column;
  align-items: center;
  font-size: 16px;
  line-height: 24px;
}
.notify { position: relative; width: 64px; height: 100%; display: flex; align-items: center; justify-content: center; }
.note { width: 22px; height: 22px; margin: 0 6px 5px 0; }
.badge {
  position: absolute;
  left: 27px;
  top: 24px;
  width: 20px;
  height: 20px;
  border-radius: 50%;
  background: #3a3f46;
  border: 1px solid #aaa;
  font-size: 13px;
  line-height: 18px;
  text-align: center;
  font-weight: 700;
}

/* watermark */
.watermark {
  position: absolute;
  left: 1637px;
  top: 985px;
  display: flex;
  gap: 10px;
  pointer-events: none;
}
.wm-logo { width: 72px; height: 84px; display: block; }
.wm-text { display: flex; flex-direction: column; width: 180px; }
.wm-big {
  font-family: "Liberation Sans", "Noto Sans CJK SC", sans-serif;
  font-weight: 700;
  font-size: 42px;
  line-height: 50px;
  white-space: nowrap;
  color: rgba(205,225,245,.62);
}
.wm-url {
  font-family: "Liberation Sans", sans-serif;
  font-size: 18px;
  line-height: 22px;
  letter-spacing: 1.500px;
  white-space: nowrap;
  color: rgba(255,255,255,.2);
}
```
